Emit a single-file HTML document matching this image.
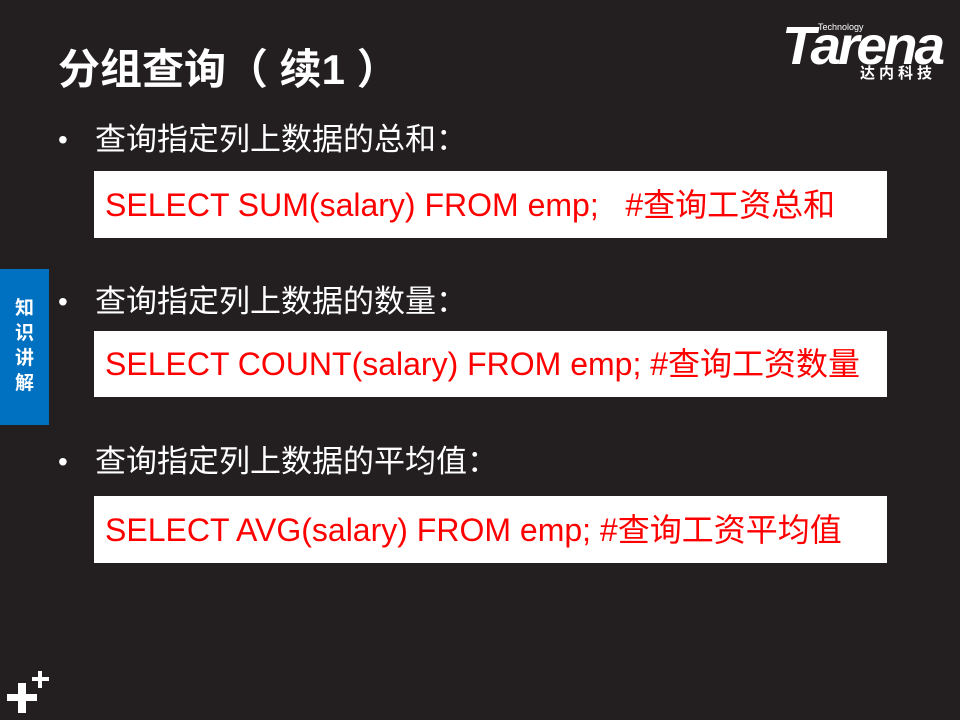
<!DOCTYPE html>
<html><head><meta charset="utf-8"><style>
body{margin:0;width:960px;height:720px;background:#231f20;position:relative;overflow:hidden;font-family:"Liberation Sans","Noto Sans CJK SC",sans-serif;}
.t{position:absolute;left:58px;top:42px;color:#fff;font-size:42px;font-weight:bold;line-height:56px;white-space:nowrap}
.b{position:absolute;left:95px;color:#fff;font-size:31px;line-height:40px;white-space:nowrap}
.b:before{content:"•";position:absolute;left:-37px;font-size:28px}
.box{position:absolute;left:94px;width:793px;background:#fff;}
.box span{position:absolute;left:11px;color:#ff0000;font-size:32px;line-height:40px;white-space:nowrap;top:14px}
.tab{position:absolute;left:0;top:269px;width:49px;height:156px;background:#0070c0;color:#fff;font-weight:bold;font-size:19px;line-height:25px;text-align:center;padding-top:27px;box-sizing:border-box}
.p{position:absolute;background:#fff}
</style></head><body>
<div class="t">分组查询（ 续1 ）</div>
<svg style="position:absolute;left:778px;top:18px" width="182" height="66">
<text x="4" y="46" fill="#fff" font-family="Liberation Sans" font-weight="bold" font-style="italic" font-size="54" letter-spacing="-3" textLength="160" lengthAdjust="spacingAndGlyphs">Tarena</text>
<text x="40" y="12" fill="#fff" font-family="Liberation Sans" font-size="9">Technology</text>
<text x="82" y="60" fill="#fff" font-family="Noto Sans CJK SC" font-weight="bold" font-size="15" letter-spacing="4">达内科技</text>
</svg>
<div class="b" style="top:120px">查询指定列上数据的总和：</div>
<div class="box" style="top:171px;height:67px"><span>SELECT SUM(salary) FROM emp;&nbsp;&nbsp; #查询工资总和</span></div>
<div class="b" style="top:282px">查询指定列上数据的数量：</div>
<div class="box" style="top:331px;height:66px"><span style="top:13px">SELECT COUNT(salary) FROM emp;&nbsp;#查询工资数量</span></div>
<div class="b" style="top:442px">查询指定列上数据的平均值：</div>
<div class="box" style="top:496px;height:67px"><span>SELECT AVG(salary) FROM emp;&nbsp;#查询工资平均值</span></div>
<div class="tab">知<br>识<br>讲<br>解</div>
<div class="p" style="left:7px;top:694px;width:30px;height:7px"></div>
<div class="p" style="left:18px;top:683px;width:8px;height:30px"></div>
<div class="p" style="left:32px;top:677px;width:17px;height:4px"></div>
<div class="p" style="left:38px;top:671px;width:4px;height:17px"></div>
</body></html>
